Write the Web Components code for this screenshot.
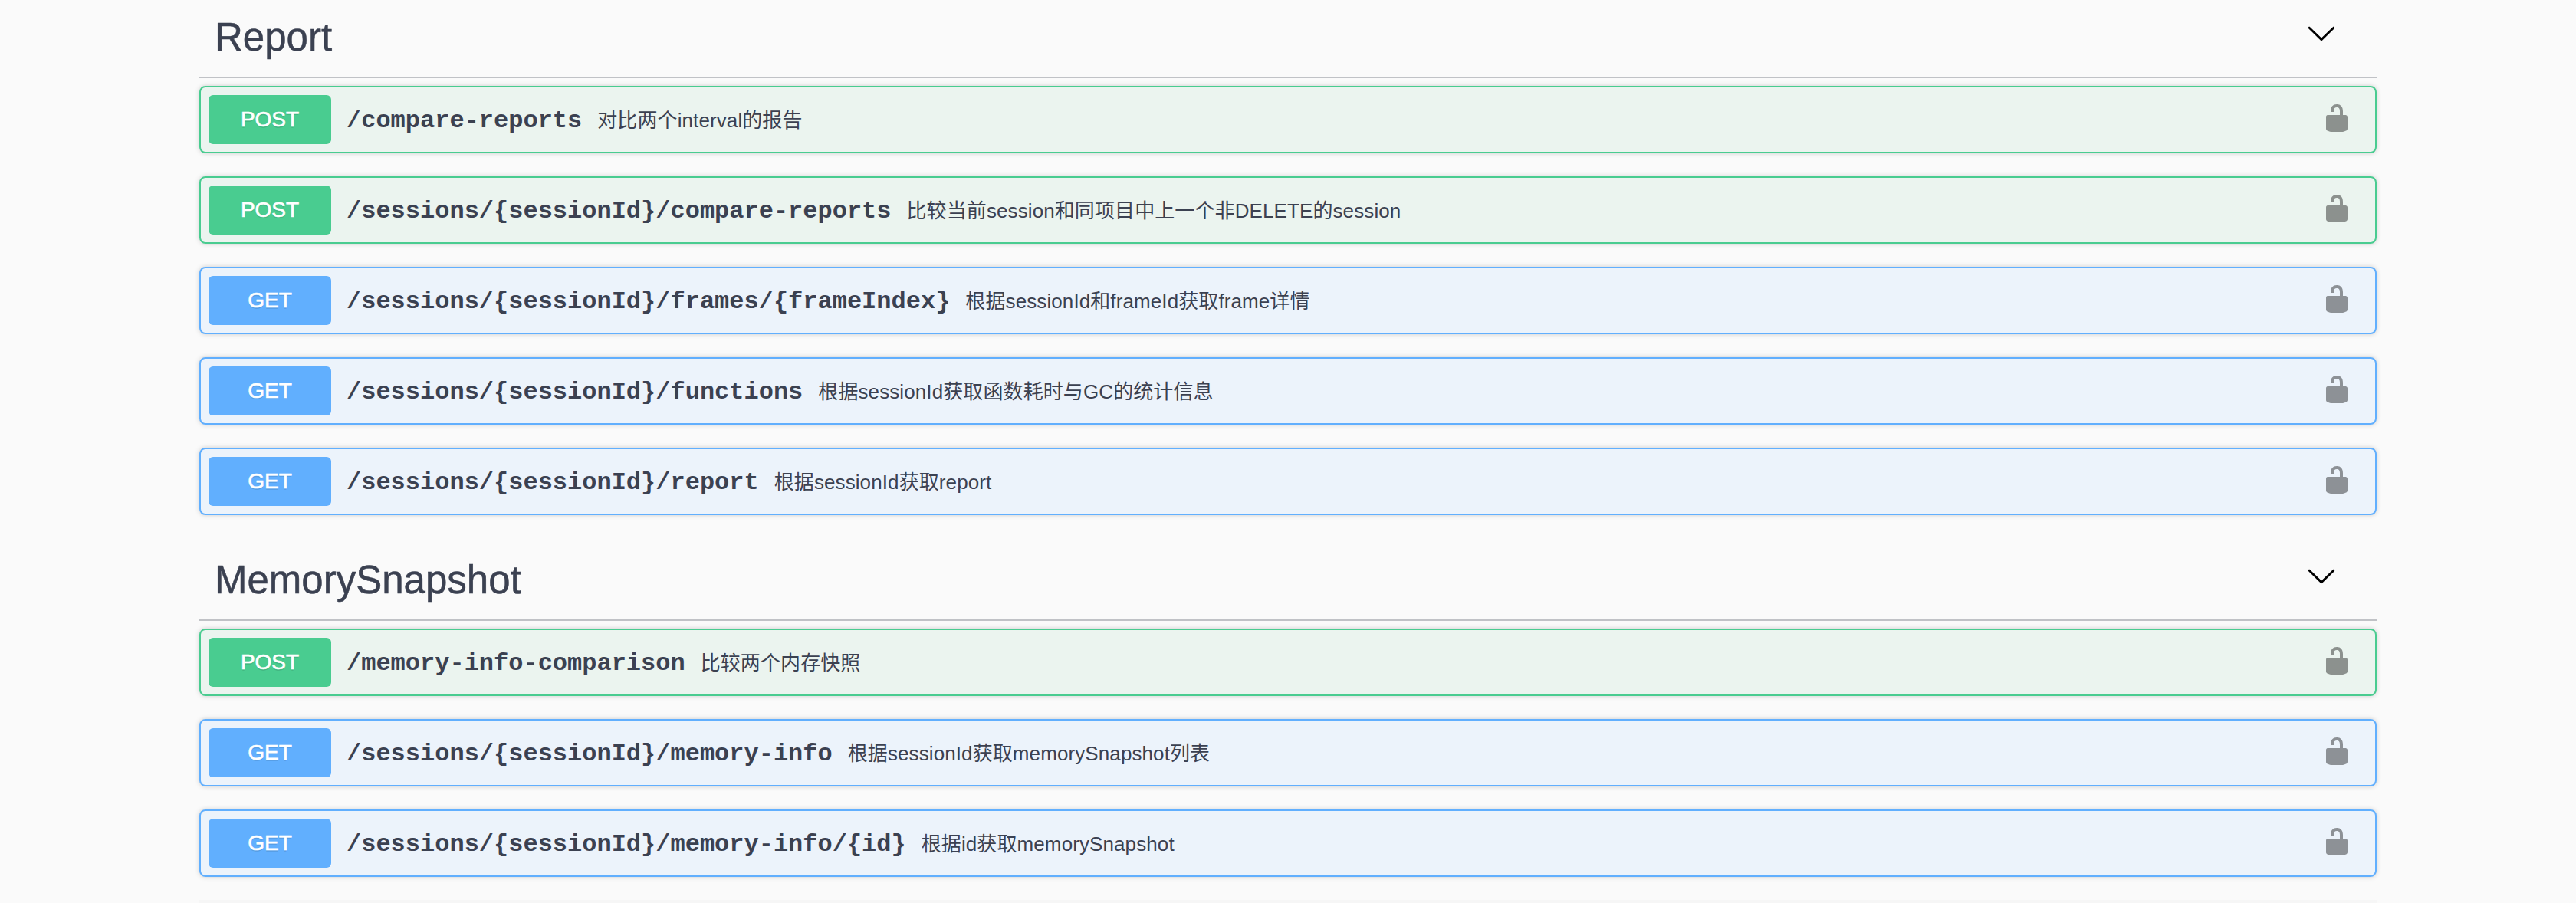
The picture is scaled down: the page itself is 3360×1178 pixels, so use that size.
<!DOCTYPE html>
<html>
<head>
<meta charset="utf-8">
<title>API docs</title>
<style>
  html, body { margin: 0; background: #fafafa; overflow: hidden; }
  body { padding: 0 260px; height: 1178px; box-sizing: border-box; }
</style>
</head>
<body>
<api-section heading="Report" class="first">
  <api-op method="post" path="/compare-reports">对比两个interval的报告</api-op>
  <api-op method="post" path="/sessions/{sessionId}/compare-reports">比较当前session和同项目中上一个非DELETE的session</api-op>
  <api-op method="get" path="/sessions/{sessionId}/frames/{frameIndex}">根据sessionId和frameId获取frame详情</api-op>
  <api-op method="get" path="/sessions/{sessionId}/functions">根据sessionId获取函数耗时与GC的统计信息</api-op>
  <api-op method="get" path="/sessions/{sessionId}/report">根据sessionId获取report</api-op>
</api-section>
<api-section heading="MemorySnapshot">
  <api-op method="post" path="/memory-info-comparison">比较两个内存快照</api-op>
  <api-op method="get" path="/sessions/{sessionId}/memory-info">根据sessionId获取memorySnapshot列表</api-op>
  <api-op method="get" path="/sessions/{sessionId}/memory-info/{id}">根据id获取memorySnapshot</api-op>
</api-section>
<api-band></api-band>
<script>
class ApiSection extends HTMLElement {
  constructor() {
    super();
    this.attachShadow({ mode: "open" });
  }

  connectedCallback() {
    const first = this.classList.contains("first");
    this.shadowRoot.innerHTML = `
      <style>
        :host {
          display: block;
          font-family: "Liberation Sans", "Noto Sans CJK SC", sans-serif;
          color: #3b4151;
        }
        .tag {
          display: flex;
          align-items: center;
          justify-content: space-between;
          height: 100px;
          padding: ${first ? 0 : 36}px 52px 0 20px;
          border-bottom: 2px solid rgba(59, 65, 81, 0.3);
        }
        h4 {
          margin: 0 0 4px;
          font-size: 51px;
          font-weight: 400;
          line-height: 1;
          -webkit-text-stroke: 0.5px #3b4151;
        }
        svg { width: 40px; height: 40px; display: block; margin-bottom: 14px; }
        .ops { display: flex; flex-direction: column; gap: 30px; padding-top: 10px; }
      </style>
      <div class="tag">
        <h4>${this.getAttribute("heading")}</h4>
        <svg viewBox="0 0 20 20"><path d="M17.418 6.109c.272-.268.709-.268.979 0s.271.701 0 .969l-7.908 7.83c-.27.268-.707.268-.979 0l-7.908-7.83c-.27-.268-.27-.701 0-.969.271-.268.709-.268.979 0L10 13.25l7.418-7.141z"/></svg>
      </div>
      <div class="ops"><slot></slot></div>
    `;
  }
}

class ApiOp extends HTMLElement {
  constructor() {
    super();
    this.attachShadow({ mode: "open" });
  }

  connectedCallback() {
    const method = this.getAttribute("method");
    const color = method === "post" ? "73, 204, 144" : "97, 175, 254";
    const tint = method === "post" ? "#ebf4ef" : "#ecf3fb";
    this.shadowRoot.innerHTML = `
      <style>
        :host {
          display: flex;
          align-items: center;
          height: 88px;
          box-sizing: border-box;
          padding: 0 30px 0 10px;
          border: 2px solid rgb(${color});
          border-radius: 8px;
          background: ${tint};
          box-shadow: 0 0 6px rgba(0, 0, 0, 0.19);
        }
        .method {
          width: 160px;
          height: 64px;
          flex: none;
          display: flex;
          align-items: center;
          justify-content: center;
          border-radius: 6px;
          background: rgb(${color});
          color: #fff;
          font: 400 28px "Liberation Sans", sans-serif;
          -webkit-text-stroke: 0.6px #fff;
          text-shadow: 0 2px 0 rgba(0, 0, 0, 0.1);
        }
        .path {
          margin: 2px 0 0 20px;
          font: 700 32px "Liberation Mono", monospace;
          color: #3b4151;
        }
        .summary {
          flex: 1;
          margin: 0 0 4px 20px;
          font: 400 26px "Liberation Sans", "Noto Sans CJK SC", sans-serif;
          letter-spacing: 0.1px;
          color: #3b4151;
        }
        svg { width: 40px; height: 40px; display: block; opacity: 0.4; margin-bottom: 4px; }
      </style>
      <span class="method">${method.toUpperCase()}</span>
      <span class="path">${this.getAttribute("path")}</span>
      <span class="summary"><slot></slot></span>
      <svg viewBox="0 0 20 20"><path d="M15.8 8H14V5.6C14 2.703 12.665 1 10 1 7.334 1 6 2.703 6 5.6V6h2v-.801C8 3.754 8.797 3 10 3c1.203 0 2 .754 2 2.199V8H4c-.553 0-1 .646-1 1.199V17c0 .549.428 1.139.951 1.307l1.197.387C5.672 18.861 6.55 19 7.1 19h5.8c.549 0 1.428-.139 1.951-.307l1.196-.387c.524-.167.953-.757.953-1.306V9.199C17 8.646 16.352 8 15.8 8z"/></svg>
    `;
  }
}

// faint edge of the next section at the bottom of the page
class ApiBand extends HTMLElement {
  constructor() {
    super();
    this.attachShadow({ mode: "open" }).innerHTML = `
      <style>
        :host { display: block; height: 4px; margin-top: 30px; background: #f6f6f6; }
      </style>
    `;
  }
}

customElements.define("api-section", ApiSection);
customElements.define("api-op", ApiOp);
customElements.define("api-band", ApiBand);
</script>
</body>
</html>
